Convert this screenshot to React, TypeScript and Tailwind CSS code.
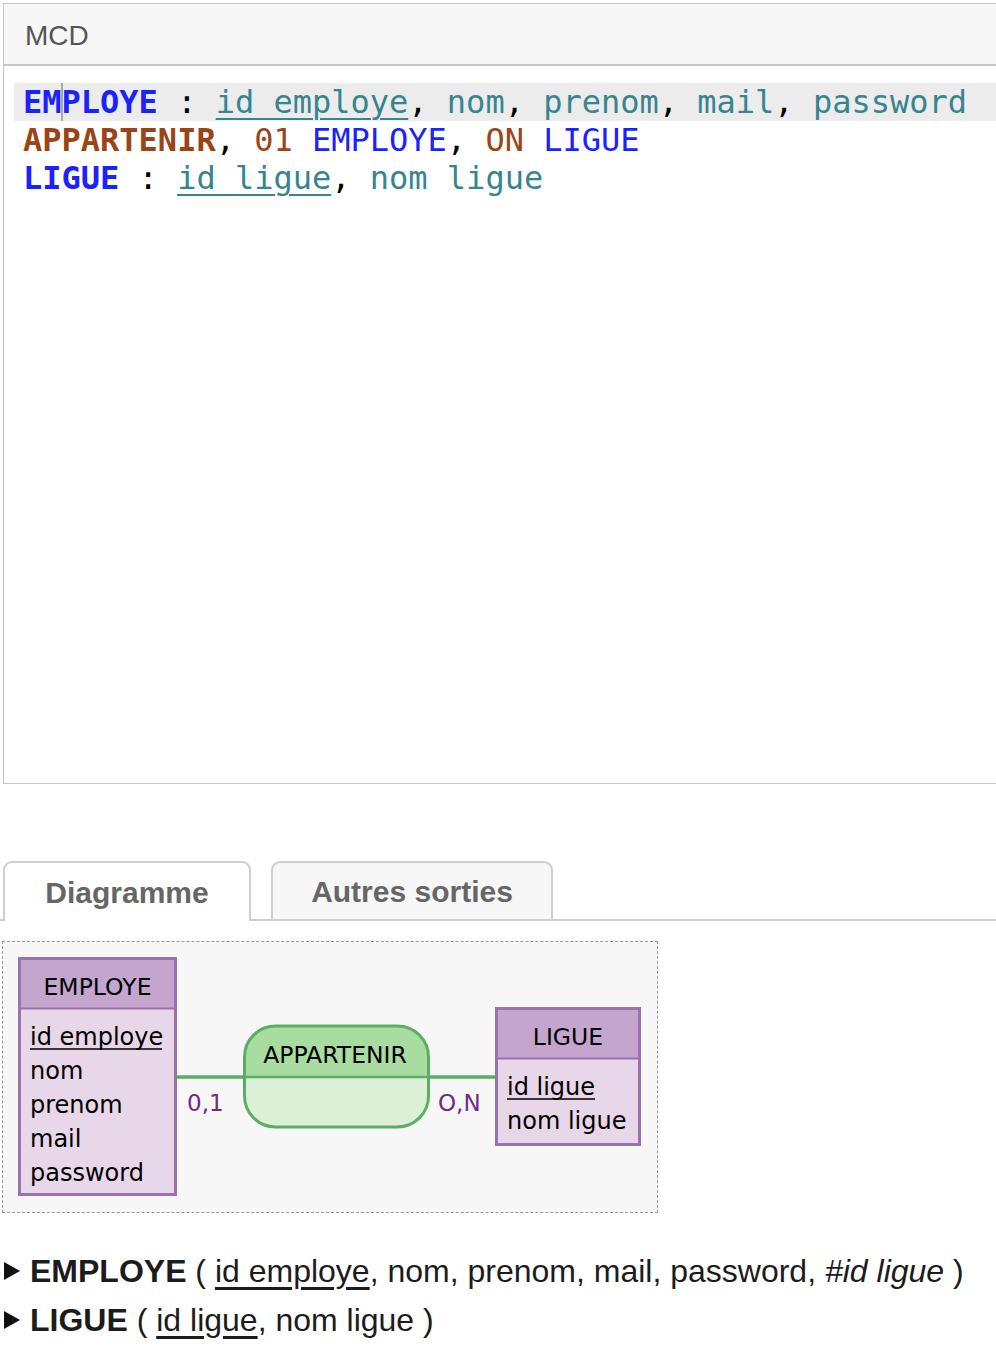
import React from "react";

const mono = { fontFamily: '"DejaVu Sans Mono", "Liberation Mono", monospace' };
const sans = { fontFamily: '"Liberation Sans", Arial, sans-serif' };

const KW = "text-[#1a22ff]";
const AT = "text-[#36858f]";
const BR = "text-[#9a4516]";

function Code() {
  return (
    <div className="pt-[17px] pl-[10px] text-[32px]" style={mono}>
      <div className="relative h-[38px] leading-[38px] pl-[9px] bg-[#ececec] whitespace-pre">
        <span className={`${KW} font-bold`}>EMPLOYE</span>
        <span className="text-black"> : </span>
        <span className={`${AT} underline underline-offset-[5px] decoration-2`}>id employe</span>
        <span className="text-black">, </span>
        <span className={AT}>nom</span>
        <span className="text-black">, </span>
        <span className={AT}>prenom</span>
        <span className="text-black">, </span>
        <span className={AT}>mail</span>
        <span className="text-black">, </span>
        <span className={AT}>password</span>
        <span className="absolute left-[47px] top-0 h-[38px] w-[2px] bg-[#a8a8a8]" />
      </div>
      <div className="h-[38px] leading-[38px] pl-[9px] whitespace-pre">
        <span className={`${BR} font-bold`}>APPARTENIR</span>
        <span className="text-black">, </span>
        <span className={BR}>01</span>
        <span className={KW}> EMPLOYE</span>
        <span className="text-black">, </span>
        <span className={BR}>ON</span>
        <span className={KW}> LIGUE</span>
      </div>
      <div className="h-[38px] leading-[38px] pl-[9px] whitespace-pre">
        <span className={`${KW} font-bold`}>LIGUE</span>
        <span className="text-black"> : </span>
        <span className={`${AT} underline underline-offset-[5px] decoration-2`}>id ligue</span>
        <span className="text-black">, </span>
        <span className={AT}>nom ligue</span>
      </div>
    </div>
  );
}

function Diagram() {
  // page coords translated into the box's inner area
  const ox = 3;
  const oy = 942;
  const f = '"DejaVu Sans", Verdana, sans-serif';
  return (
    <svg width="655" height="270" viewBox={`${ox} ${oy} 655 270`} className="block">
      <line x1="177" y1="1077" x2="244" y2="1077" stroke="#5cae63" strokeWidth="3.5" />
      <line x1="428" y1="1077" x2="496" y2="1077" stroke="#5cae63" strokeWidth="3.5" />

      {/* EMPLOYE */}
      <rect x="19.5" y="958.5" width="156" height="236" fill="#e8d6e9" />
      <rect x="19.5" y="958.5" width="156" height="50" fill="#c3a5ce" />
      <line x1="19.5" y1="1008.5" x2="175.5" y2="1008.5" stroke="#9b72ab" strokeWidth="2" />
      <rect x="19.5" y="958.5" width="156" height="236" fill="none" stroke="#9b72ab" strokeWidth="3" />
      <text x="97.5" y="995" textAnchor="middle" fontFamily={f} fontSize="23.5" fill="#000">EMPLOYE</text>
      <text x="30" y="1045" fontFamily={f} fontSize="24" fill="#000">id employe</text>
      <line x1="30" y1="1049" x2="162" y2="1049" stroke="#000" strokeWidth="1.5" />
      <text x="30" y="1079" fontFamily={f} fontSize="24" fill="#000">nom</text>
      <text x="30" y="1113" fontFamily={f} fontSize="24" fill="#000">prenom</text>
      <text x="30" y="1147" fontFamily={f} fontSize="24" fill="#000">mail</text>
      <text x="30" y="1181" fontFamily={f} fontSize="24" fill="#000">password</text>

      {/* APPARTENIR */}
      <path d="M244.5 1077 V1057 a31 31 0 0 1 31 -31 h122 a31 31 0 0 1 31 31 V1077 Z" fill="#a8dca1" />
      <path d="M244.5 1077 V1096 a31 31 0 0 0 31 31 h122 a31 31 0 0 0 31 -31 V1077 Z" fill="#dbf0d6" />
      <line x1="244.5" y1="1077" x2="428.5" y2="1077" stroke="#5cae63" strokeWidth="2.5" />
      <rect x="244.5" y="1026" width="184" height="101" rx="31" fill="none" stroke="#5cae63" strokeWidth="3" />
      <text x="335" y="1063" textAnchor="middle" fontFamily={f} fontSize="23.5" fill="#000">APPARTENIR</text>

      <text x="187" y="1111" fontFamily={f} fontSize="23" fill="#6d2a86">0,1</text>
      <text x="438" y="1111" fontFamily={f} fontSize="23" fill="#6d2a86">O,N</text>

      {/* LIGUE */}
      <rect x="496.5" y="1008.5" width="143" height="136" fill="#e8d6e9" />
      <rect x="496.5" y="1008.5" width="143" height="50" fill="#c3a5ce" />
      <line x1="496.5" y1="1058.5" x2="639.5" y2="1058.5" stroke="#9b72ab" strokeWidth="2" />
      <rect x="496.5" y="1008.5" width="143" height="136" fill="none" stroke="#9b72ab" strokeWidth="3" />
      <text x="568" y="1045" textAnchor="middle" fontFamily={f} fontSize="23.5" fill="#000">LIGUE</text>
      <text x="507" y="1095" fontFamily={f} fontSize="24" fill="#000">id ligue</text>
      <line x1="507" y1="1099" x2="595" y2="1099" stroke="#000" strokeWidth="1.5" />
      <text x="507" y="1129" fontFamily={f} fontSize="24" fill="#000">nom ligue</text>
    </svg>
  );
}

function Arrow() {
  return (
    <svg width="18" height="20" viewBox="0 0 18 20" className="shrink-0 mr-[9px]">
      <path d="M1 1 L17 10 L1 19 Z" fill="#111" />
    </svg>
  );
}

export default function App() {
  return (
    <div className="min-h-screen w-full overflow-hidden bg-white" style={sans}>
      <div className="ml-[3px] mt-[3px] w-[1010px] h-[781px] border border-[#c6c6c6] bg-white">
        <div className="h-[62px] pt-[3px] bg-[#f7f7f7] border-b-2 border-[#c6c6c6] px-[21px] flex items-center text-[28px] text-[#555]">
          MCD
        </div>
        <Code />
      </div>

      <div className="mt-[77px] flex items-end border-b-2 border-[#cfcfcf]">
        <div className="ml-[3px] -mb-[2px] h-[60px] w-[248px] rounded-t-[9px] border-2 border-b-0 border-[#cfcfcf] bg-white flex items-center justify-center text-[30px] font-bold text-[#666]">
          Diagramme
        </div>
        <div className="ml-[20px] h-[58px] w-[282px] rounded-t-[9px] border-2 border-b-0 border-[#cfcfcf] bg-[#f7f7f7] flex items-center justify-center text-[30px] font-bold text-[#666]">
          Autres sorties
        </div>
      </div>

      <div className="mt-[20px] ml-[2px] w-[656px] h-[272px] border border-dashed border-[#9a9a9a] bg-[#f7f7f7]">
        <Diagram />
      </div>

      <div className="mt-[33px] text-[32px] text-[#1c1c1c]">
        <div className="h-[49px] flex items-center pl-[3px] whitespace-pre">
          <Arrow />
          <span className="font-bold">EMPLOYE</span>
          <span> ( </span>
          <span className="underline underline-offset-[5px]">id employe</span>
          <span>, nom, prenom, mail, password, </span>
          <span className="italic">#id ligue</span>
          <span> )</span>
        </div>
        <div className="h-[49px] flex items-center pl-[3px] whitespace-pre">
          <Arrow />
          <span className="font-bold">LIGUE</span>
          <span> ( </span>
          <span className="underline underline-offset-[5px]">id ligue</span>
          <span>, nom ligue )</span>
        </div>
      </div>
    </div>
  );
}
